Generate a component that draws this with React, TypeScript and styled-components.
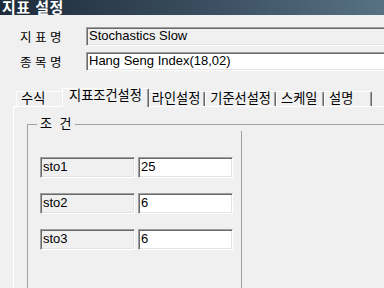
import styled, { createGlobalStyle } from "styled-components";

const GlobalStyle = createGlobalStyle`
  html, body {
    margin: 0;
    padding: 0;
    background: #f0f0f0;
  }
  body {
    font-family: "Liberation Sans", "Noto Sans CJK KR", sans-serif;
    font-size: 12px;
    color: #000;
  }
`;

const Window = styled.div`
  width: 384px;
  height: 288px;
  overflow: hidden;
  display: flex;
  flex-direction: column;
  background: #f0f0f0;
`;

const TitleBar = styled.div`
  height: 15px;
  line-height: 15px;
  padding-left: 2px;
  background: linear-gradient(to right, #1e2b3a, #3a4f61 55%, #587283);
  color: #fff;
  font-size: 15px;
  font-weight: bold;
  letter-spacing: 0.5px;
  white-space: nowrap;
`;

const Form = styled.div`
  display: flex;
  flex-direction: column;
  gap: 6px;
  padding-top: 12px;
`;

const FieldRow = styled.div`
  display: flex;
  align-items: center;
`;

const FieldLabel = styled.div`
  width: 86px;
  padding-left: 20px;
  box-sizing: border-box;
  font-size: 12.5px;
  white-space: pre;
`;

const TextBox = styled.div<{ $disabled?: boolean }>`
  flex: 1;
  height: 19px;
  box-sizing: border-box;
  margin-right: -20px;
  padding: 0 2px;
  line-height: 16px;
  font-size: 13px;
  white-space: nowrap;
  background: ${(p) => (p.$disabled ? "#f0f0f0" : "#fff")};
  border: 1px solid;
  border-color: #a0a0a0 #fff #fff #a0a0a0;
  box-shadow: inset 1px 1px #696969, inset -1px -1px #e3e3e3;
`;

const Tabs = styled.div`
  flex: 1;
  display: flex;
  flex-direction: column;
  margin-top: 17px;
`;

const TabStrip = styled.div`
  display: flex;
  align-items: flex-end;
  height: 18px;
  padding-left: 16px;
  position: relative;
  z-index: 1;
`;

const Tab = styled.div<{ $active?: boolean }>`
  box-sizing: border-box;
  min-width: ${(p) => (p.$active ? "52px" : "48px")};
  height: ${(p) => (p.$active ? "19px" : "15px")};
  margin: ${(p) => (p.$active ? "0 -2px -1px" : "0")};
  padding: ${(p) => (p.$active ? "0 6px 0 6px" : "0 4px 0 4px")};
  line-height: 14px;
  font-size: 13.2px;
  white-space: nowrap;
  background: #f0f0f0;
  border-top: 1px solid #fff;
  border-left: 1px solid #fff;
  border-right: 1px solid #696969;
  border-radius: 2px 2px 0 0;
  box-shadow: inset -1px 0 #a0a0a0;
  position: relative;
  z-index: ${(p) => (p.$active ? 2 : 0)};
`;

const TabPanel = styled.div`
  flex: 1;
  min-height: 220px;
  margin-left: 13px;
  margin-right: -40px;
  border-top: 1px solid #fff;
  border-left: 1px solid #fff;
  display: flex;
  flex-direction: column;
`;

const GroupBox = styled.fieldset`
  margin: 10px 0 0 13px;
  padding: 0;
  min-width: 0;
  min-height: 200px;
  border: 1px solid #a0a0a0;
  display: flex;
`;

const GroupLegend = styled.legend`
  margin-left: 9px;
  padding: 0 3px;
  line-height: 14px;
  font-size: 13px;
  word-spacing: 4px;
  white-space: pre;
`;

const GroupBody = styled.div`
  display: flex;
  align-items: stretch;
  min-height: 200px;
`;

const ParamList = styled.div`
  width: 213px;
  box-sizing: border-box;
  padding: 26px 0 0 12px;
  display: flex;
  flex-direction: column;
  gap: 15px;
`;

const Divider = styled.div`
  border-left: 1px solid #a0a0a0;
`;

const ParamRow = styled.div`
  display: flex;
  gap: 3px;
`;

const ParamBox = styled.div<{ $value?: boolean }>`
  width: 95px;
  height: 21px;
  box-sizing: border-box;
  padding: 0 2px;
  line-height: 17px;
  font-size: 13px;
  background: ${(p) => (p.$value ? "#fff" : "#f0f0f0")};
  border: 1px solid;
  border-color: #a0a0a0 #fff #fff #a0a0a0;
  box-shadow: inset 1px 1px #696969, inset -1px -1px #e3e3e3;
`;

const tabs = ["수식", "지표조건설정", "라인설정", "기준선설정", "스케일", "설명"];
const params = [
  { name: "sto1", value: "25" },
  { name: "sto2", value: "6" },
  { name: "sto3", value: "6" },
];

export default function App() {
  return (
    <>
      <GlobalStyle />
      <Window>
        <TitleBar>지표 설정</TitleBar>
        <Form>
          <FieldRow>
            <FieldLabel>지 표 명</FieldLabel>
            <TextBox $disabled>Stochastics Slow</TextBox>
          </FieldRow>
          <FieldRow>
            <FieldLabel>종 목 명</FieldLabel>
            <TextBox>Hang Seng Index(18,02)</TextBox>
          </FieldRow>
        </Form>
        <Tabs>
          <TabStrip>
            {tabs.map((t, i) => (
              <Tab key={t} $active={i === 1}>
                {t}
              </Tab>
            ))}
          </TabStrip>
          <TabPanel>
            <GroupBox>
              <GroupLegend>조 건</GroupLegend>
              <GroupBody>
                <ParamList>
                  {params.map((p) => (
                    <ParamRow key={p.name}>
                      <ParamBox>{p.name}</ParamBox>
                      <ParamBox $value>{p.value}</ParamBox>
                    </ParamRow>
                  ))}
                </ParamList>
                <Divider />
              </GroupBody>
            </GroupBox>
          </TabPanel>
        </Tabs>
      </Window>
    </>
  );
}
